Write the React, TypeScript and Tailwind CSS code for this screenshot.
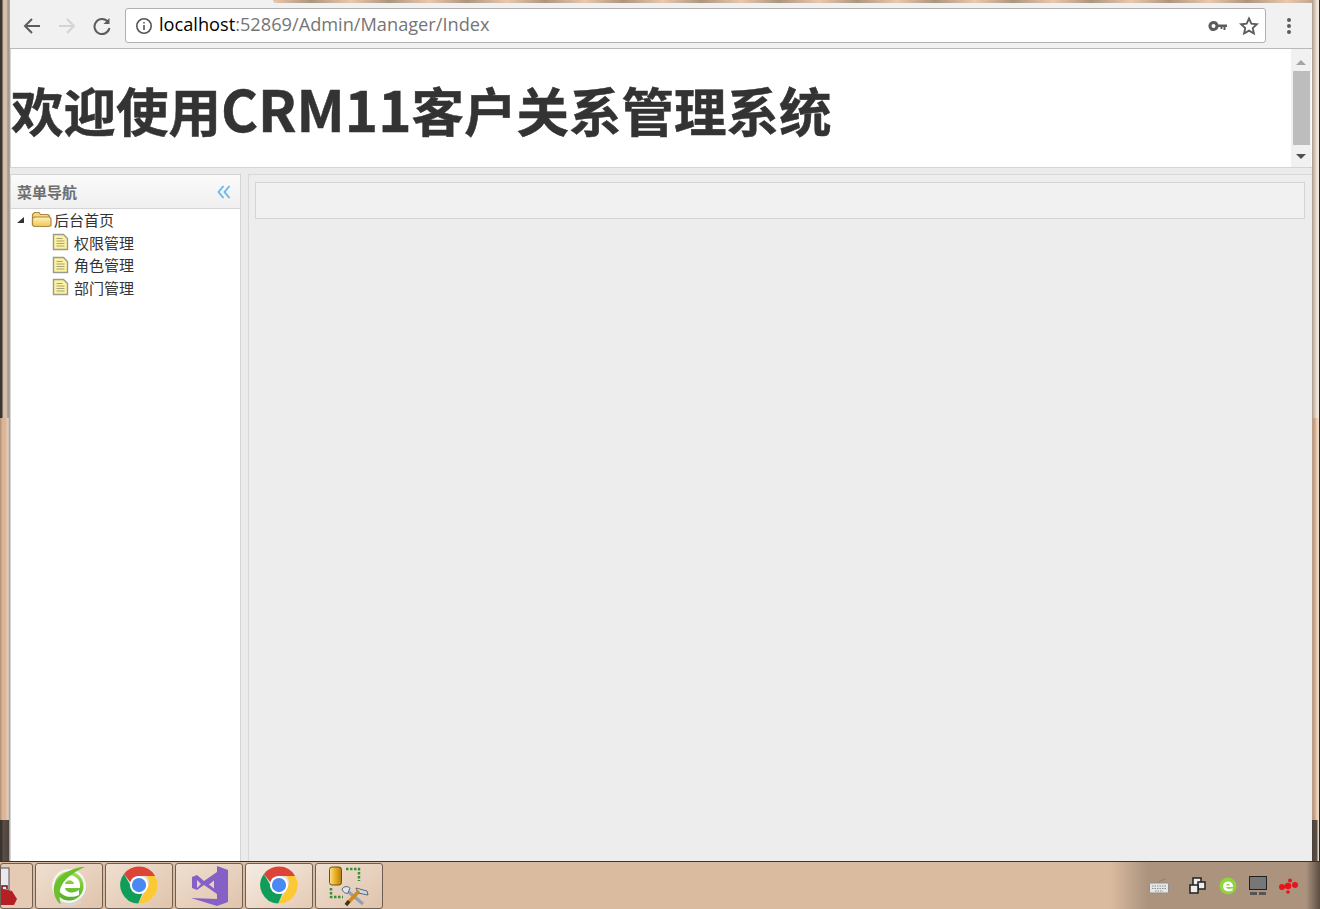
import React from "react";

const cjk = '"Noto Sans CJK SC","Noto Sans",sans-serif';

function ChromeLogo({ size = 38, id }: { size?: number; id: string }) {
  return (
    <svg width={size} height={size} viewBox="0 0 48 48" className="mt-[-2px]">
      <circle cx="24" cy="24" r="23.500" fill="#e0e0e0" />
      <path d="M24 .5A23.500 23.500 0 0 1 44.400 12.500H24a11.500 11.500 0 0 0-11 8L5 10A23.500 23.500 0 0 1 24 .5z" fill="#db4437" />
      <path d="M44.400 12.500A23.500 23.500 0 0 1 23 47.500l11-19.500a11.500 11.500 0 0 0-1-15.500z" fill="#fcc934" />
      <path d="M5 10l9.500 16.500a11.500 11.500 0 0 0 14 8L23 47.500A23.500 23.500 0 0 1 5 10z" fill="#0f9d58" />
      <circle cx="24" cy="24" r="11.500" fill="#fff" />
      <circle cx="24" cy="24" r="9" fill="#4a89f3" data-id={id} />
    </svg>
  );
}

function DocIcon() {
  return (
    <svg width="17" height="18" viewBox="0 0 17 18" className="shrink-0">
      <path d="M1.500 1.500h10l4 4v11h-14z" fill="#fdf2a0" stroke="#9a9a90" strokeWidth="1.400" />
      <path d="M4.500 5.500h6M4.500 8h8M4.500 10.500h8M4.500 13h8" stroke="#a8a27a" strokeWidth="1.200" />
    </svg>
  );
}

function TreeRow({ label }: { label: string }) {
  return (
    <div className="h-[22.500px] pl-[41px] flex items-center text-[15px] leading-none text-[#333]">
      <DocIcon />
      <span className="ml-[5px]">{label}</span>
    </div>
  );
}

function TaskButton({ children, light }: { children: React.ReactNode; light?: boolean }) {
  return (
    <div
      className={`w-[68px] h-[46px] mr-[2px] rounded-[3px] border border-[#6f5f52] flex items-center justify-center overflow-hidden ${
        light ? "bg-gradient-to-br from-[#f6ece3] to-[#e4cab3]" : "bg-gradient-to-br from-[#efdfd0] to-[#e0c4ac]"
      }`}
    >
      {children}
    </div>
  );
}

export default function App() {
  return (
    <div className="w-[1320px] h-[909px] overflow-hidden flex flex-col bg-[#d9b9a0]" style={{ fontFamily: cjk }}>
      <div className="flex-1 min-h-0 flex">
        <div className="w-[9px] shrink-0 flex flex-col">
          <div className="h-[418px] bg-[linear-gradient(90deg,#3d332d_0px,#3d332d_2px,#cdb7a3_3px,#d6c6b8_6px,#a89888_8px,#a89888_9px)]" />
          <div className="flex-1 bg-[linear-gradient(90deg,#b4967e_0px,#b4967e_1px,#dcb496_2px,#dcb496_6px,#e6ceb8_7px,#c8c0b8_9px)]" />
          <div className="h-[41px] bg-[linear-gradient(90deg,#3d332d_0px,#3d332d_2px,#5c5048_3px,#4c423c_9px)]" />
        </div>
        <div className="w-[1303px] flex flex-col border-l border-[#a8a8a8] bg-[#ebebeb]">
          <div className="h-[3px] shrink-0 flex bg-[#f1f1f1]">
            <div className="w-[263px] shrink-0" />
            <div className="flex-1 rounded-bl-[3px] bg-[repeating-linear-gradient(90deg,#e9c8ac_0px,#ad9682_38px,#e9c8ac_78px)]" />
          </div>
          <div className="h-[45px] shrink-0 bg-[#f1f1f1] flex items-center pl-[12px] pr-[20px]">
            <svg width="20" height="20" viewBox="0 0 20 20" fill="none" stroke="#5c5c5c" strokeWidth="2">
              <path d="M18 10H3M10 3l-7 7 7 7" />
            </svg>
            <svg className="ml-[15px]" width="20" height="20" viewBox="0 0 20 20" fill="none" stroke="#d4d4d4" strokeWidth="2">
              <path d="M2 10h15M10 3l7 7-7 7" />
            </svg>
            <svg className="ml-[15px]" width="20" height="20" viewBox="0 0 20 20" fill="none" stroke="#5c5c5c" strokeWidth="2">
              <path d="M16 6a7.500 7.500 0 1 0 1.400 6" />
              <path d="M17.500 2v6h-6z" fill="#5c5c5c" stroke="none" />
            </svg>
            <div className="ml-[13px] w-[1141px] h-[35px] bg-white border border-[#b0b0b0] rounded-[3px] flex items-center pl-[9px] pr-[6px]">
              <svg width="18" height="18" viewBox="0 0 18 18" fill="none" stroke="#555" strokeWidth="1.600" className="shrink-0">
                <circle cx="9" cy="9" r="7.200" />
                <path d="M9 8v5M9 5v1.600" />
              </svg>
              <span className="ml-[6px] mt-[-2px] text-[18.200px] leading-none text-[#757575]" style={{ fontFamily: '"Open Sans",sans-serif' }}>
                <span className="text-black">localhost</span>:52869/Admin/Manager/Index
              </span>
              <span className="flex-1" />
              <svg width="20" height="12" viewBox="0 0 20 12" fill="#5c5c5c">
                <path d="M5.500 1a5 5 0 1 1-4.600 7A5 5 0 0 1 5.500 1zm0 3a2 2 0 1 0 0 4 2 2 0 0 0 0-4z" fillRule="evenodd" />
                <path d="M10 4.500h9v2.500h-1.500v3h-2V7h-1v2h-2V7H10z" />
              </svg>
              <svg className="ml-[11px]" width="20" height="20" viewBox="0 0 24 24" fill="none" stroke="#5c5c5c" strokeWidth="2.200">
                <path d="M12 3l2.800 6.200 6.700.7-5 4.500 1.400 6.600-5.900-3.400L6.100 21l1.400-6.600-5-4.500 6.700-.7z" />
              </svg>
            </div>
            <span className="flex-1" />
            <svg width="6" height="18" viewBox="0 0 6 18" fill="#5c5c5c">
              <circle cx="3" cy="3" r="2" />
              <circle cx="3" cy="9" r="2" />
              <circle cx="3" cy="15" r="2" />
            </svg>
          </div>
          <div className="h-[1px] shrink-0 bg-[#b9b9b9]" />

          <div className="h-[119px] shrink-0 bg-white border-b border-l border-[#d4d4d4] flex">
            <h1 className="flex-1 text-[52.500px] leading-none font-bold text-[#333] pt-[30px] [-webkit-text-stroke:0.5px_#333]">
              欢迎使用<span className="text-[56.500px]">CRM11</span>客户关系管理系统
            </h1>
            <div className="w-[20px] mr-[1px] bg-[#f1f1f1] flex flex-col items-center">
              <div className="h-[22px] flex items-center justify-center pt-[4px]">
                <div className="w-0 h-0 border-l-[5px] border-r-[5px] border-b-[5px] border-l-transparent border-r-transparent border-b-[#a3a3a3]" />
              </div>
              <div className="w-[17px] h-[74px] bg-[#bdbdbd]" />
              <div className="flex-1 flex items-center justify-center pt-[1px]">
                <div className="w-0 h-0 border-l-[5px] border-r-[5px] border-t-[5px] border-l-transparent border-r-transparent border-t-[#505050]" />
              </div>
            </div>
          </div>

          <div className="flex-1 min-h-0 flex pt-[6px] bg-[#ebebeb]">
            <div className="w-[231px] shrink-0 bg-white border border-b-0 border-[#d4d4d4] flex flex-col">
              <div className="h-[34px] shrink-0 bg-gradient-to-b from-[#fafafa] to-[#f0f0f0] border-b border-[#d4d4d4] flex items-center pl-[6px] pr-[9px]">
                <span className="text-[15px] pt-[1px] font-bold text-[#6f6f6f]">菜单导航</span>
                <span className="flex-1" />
                <svg width="14" height="14" viewBox="0 0 14 14" fill="none" stroke="#66b5ee" strokeWidth="1.800">
                  <path d="M6.500 1L1.500 7l5 6M12.500 1l-5 6 5 6" />
                </svg>
              </div>
              <div className="mt-[-1px]">
                <div className="h-[23px] flex items-center pl-[6px] text-[15px] leading-none text-[#333]">
                  <svg width="8" height="8" viewBox="0 0 8 8" fill="#333">
                    <path d="M7 1v6H0z" />
                  </svg>
                  <svg className="ml-[6px] shrink-0" width="21" height="17" viewBox="0 0 21 17">
                    <defs>
                      <linearGradient id="folderFront" x1="0" y1="0" x2="0" y2="1">
                        <stop offset="0" stopColor="#fff3c0" />
                        <stop offset="1" stopColor="#f2c34e" />
                      </linearGradient>
                    </defs>
                    <path d="M1.500 14V3.500L3.500 1.500h4.500l1.500 2H17l1.500 1.500v2" fill="#f8d777" stroke="#a98a45" strokeWidth="1.200" />
                    <path d="M3 15.500h14.500l2.500-1V7.500L18.500 6h-15L1.500 7.500v6.500z" fill="url(#folderFront)" stroke="#a98a45" strokeWidth="1.200" />
                  </svg>
                  <span className="ml-[2px]">后台首页</span>
                </div>
                <TreeRow label="权限管理" />
                <TreeRow label="角色管理" />
                <TreeRow label="部门管理" />
              </div>
            </div>
            <div className="w-[7px] shrink-0" />
            <div className="flex-1 min-w-0 bg-[#ededed] border-l border-t border-[#d8d8d8] pt-[7px] pl-[6px] pr-[7px]">
              <div className="h-[37px] bg-[#f1f1f1] border border-[#d4d4d4]" />
            </div>
          </div>
        </div>
        <div className="flex-1 flex flex-col">
          <div className="h-[418px] bg-[linear-gradient(90deg,#a89a8c_0px,#c9bcae_2px,#f0dfd0_5px,#f6ebe2_7px,#262220_7px)]" />
          <div className="flex-1 bg-[linear-gradient(90deg,#bc9c84_0px,#bc9c84_2px,#ebcdb3_5px,#f3dcc8_7px,#262220_7px)]" />
          <div className="h-[41px] bg-[linear-gradient(90deg,#4c423c_0px,#5c5048_5px,#e8d8c8_6px,#e8d8c8_7px,#262220_7px)]" />
        </div>
      </div>

      <div className="h-[48px] shrink-0 border-t border-[#3d332d] bg-[#dabb9f] flex items-center relative">
        <div className="w-[33px] h-[46px] mr-[2px] rounded-[3px] border border-[#6f5f52] bg-[#e5cab4] overflow-hidden flex items-center">
          <svg width="20" height="38" viewBox="0 0 20 38">
            <rect x="-6" y="1" width="14" height="22" fill="#e8e8ee" stroke="#555" />
            <path d="M-2 21l13 3 5 8-3 6H-2z" fill="#b52025" />
            <path d="M1 22v-3h5v3" fill="none" stroke="#701015" strokeWidth="1.500" />
          </svg>
        </div>
        <TaskButton>
          <svg width="40" height="42" viewBox="0 0 40 42">
            <defs>
              <linearGradient id="eGreen" x1="0" y1="0" x2="0" y2="1">
                <stop offset="0" stopColor="#a6e04a" />
                <stop offset="1" stopColor="#4fae2a" />
              </linearGradient>
            </defs>
            <circle cx="20" cy="21" r="17" fill="#f4f4f4" />
            <circle cx="20" cy="21" r="14.500" fill="url(#eGreen)" />
            <path d="M9 20a11 10 0 0 1 22 0v3H16c1 5 9 6 14 2v5c-8 4-21 2-21-10zm7-1h9c-1-5-8-5-9 0z" fill="#fff" fillRule="evenodd" />
            <path d="M36 2C24 2 8 10 5 22c-1 5 1 13 7 18-2-8-3-14 2-22C19 11 27 6 36 2z" fill="#6cc02f" />
            <path d="M8 39c8 2 17 1 24-2" stroke="#d8d8d8" strokeWidth="1.500" fill="none" />
          </svg>
        </TaskButton>
        <TaskButton><ChromeLogo id="a" /></TaskButton>
        <TaskButton>
          <svg width="40" height="42" viewBox="0 0 40 42" className="ml-[2px]">
            <path d="M27 1l11 4v32l-11 4L1 33l26 1z" fill="#8661c5" />
            <path d="M2 12l5-2 7 6 13-9v22l-13-9-7 5-5-2zM7 15v8l4-4zM19 19.500l5 4v-8z" fill="#8661c5" fillRule="evenodd" />
          </svg>
        </TaskButton>
        <TaskButton light><ChromeLogo id="b" /></TaskButton>
        <TaskButton>
          <svg width="42" height="42" viewBox="0 0 42 42">
            <defs>
              <linearGradient id="dbGold" x1="0" y1="0" x2="1" y2="0">
                <stop offset="0" stopColor="#fbe08a" />
                <stop offset="0.500" stopColor="#e9ae22" />
                <stop offset="1" stopColor="#b07c10" />
              </linearGradient>
            </defs>
            <rect x="1.500" y="2" width="12" height="18" rx="2.500" fill="url(#dbGold)" stroke="#6b5314" />
            <path d="M18 4h13v12M3 23v9h12" fill="none" stroke="#3c8c3c" strokeWidth="2.500" strokeDasharray="2.500 1.500" />
            <path d="M17 24l18 15" stroke="#8fa2b8" strokeWidth="3.500" />
            <path d="M14 24c2-3 6-3 8-1l-2 5c-3 1-5-1-6-4z" fill="#dfe4ea" stroke="#5a6a7a" />
            <path d="M28 23l11 3 1 4-5-1-5-1z" fill="#cfd8e2" stroke="#5a6a7a" />
            <path d="M31 26L18 40" stroke="#d08a1c" strokeWidth="3.500" />
            <path d="M21 36l-3 4" stroke="#333" strokeWidth="3.500" />
          </svg>
        </TaskButton>
        <span className="flex-1" />
        <div className="absolute right-0 top-0 bottom-0 w-[210px] bg-[linear-gradient(90deg,#dabb9f_0px,#ab937e_38px,#ab937e_196px,#5c4d42_210px)]" />
        <div className="absolute right-[22px] top-0 bottom-0 flex items-center">
          <svg width="20" height="16" viewBox="0 0 20 16">
            <path d="M10 4c2-2 5-2 7-3" stroke="#8a7f76" fill="none" />
            <rect x="0.500" y="5" width="19" height="10" rx="1" fill="#e6e6e6" stroke="#8f8f8f" />
            <path d="M3 8h14M3 10.500h14M6 13h8" stroke="#8f8f8f" strokeDasharray="1.500 1" />
          </svg>
          <svg className="ml-[20px]" width="17" height="17" viewBox="0 0 17 17">
            <rect x="4" y="1" width="8" height="8" fill="#eee" stroke="#222" strokeWidth="1.500" />
            <rect x="9" y="5" width="7" height="7" fill="#eee" stroke="#222" strokeWidth="1.500" />
            <rect x="1" y="8" width="8" height="8" fill="#eee" stroke="#222" strokeWidth="1.500" />
          </svg>
          <svg className="ml-[13px]" width="18" height="18" viewBox="0 0 18 18">
            <circle cx="9" cy="9" r="8.500" fill="#8ed63a" />
            <path d="M4 9a5 4.500 0 0 1 10 0v1H7c.5 2 4 2.500 6.500 1v2.500C9 15.500 4 14 4 9zm3-.5h4c-.5-2-3.500-2-4 0z" fill="#fff" fillRule="evenodd" />
          </svg>
          <svg className="ml-[12px]" width="18" height="20" viewBox="0 0 18 20">
            <rect x="0.500" y="0.500" width="17" height="13" fill="#777" stroke="#222" />
            <rect x="1" y="16" width="7" height="3" fill="#555" />
            <rect x="10" y="16" width="7" height="3" fill="#555" />
          </svg>
          <svg className="ml-[12px]" width="19" height="16" viewBox="0 0 19 16" fill="#e8141c">
            <circle cx="9" cy="8" r="3.200" />
            <circle cx="3" cy="9" r="3" />
            <circle cx="16" cy="7" r="3" />
            <circle cx="11" cy="2.500" r="2" />
            <circle cx="9" cy="14" r="1.800" />
          </svg>
        </div>
      </div>
    </div>
  );
}
